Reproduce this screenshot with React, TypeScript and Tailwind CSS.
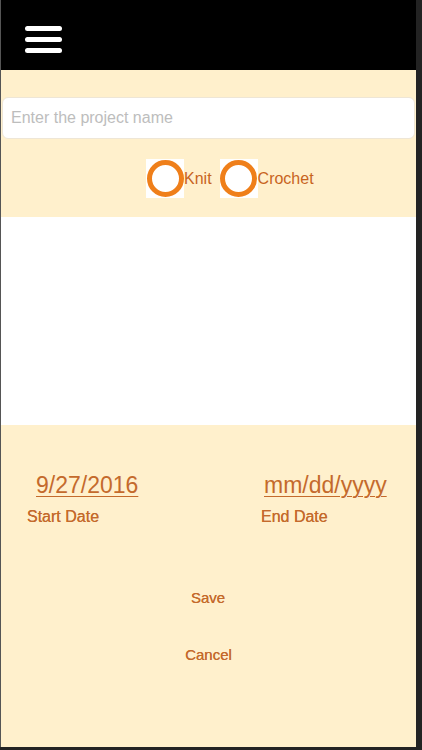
import React from 'react';

const font = { fontFamily: '"Liberation Sans", Arial, sans-serif' };

function Radio({ label }: { label: string }) {
  return (
    <label className="flex items-center">
      <span className="flex h-[39px] w-[38px] items-center justify-center bg-white">
        <span className="block h-[37px] w-[37px] rounded-full border-[5px] border-[#ef7f1a]" />
      </span>
      <span className="text-[16px] leading-none text-[#c8641e]">{label}</span>
    </label>
  );
}

function DateField({
  value,
  label,
  className,
  labelClass,
}: {
  value: string;
  label: string;
  className: string;
  labelClass: string;
}) {
  return (
    <div className={`flex flex-col ${className}`}>
      <span className="text-[23px] leading-[26px] text-[#c46a2c] underline decoration-1 underline-offset-[3px]">
        {value}
      </span>
      <span
        className={`mt-[9px] text-[16px] leading-[19px] text-[#c46a2c] [text-shadow:0_0_0.3px_#c46a2c] ${labelClass}`}
      >
        {label}
      </span>
    </div>
  );
}

export default function App() {
  return (
    <div className="flex h-[750px] w-[422px] bg-[#232323]" style={font}>
      <div className="flex h-[747px] w-[416px] flex-col border-l border-[#555]">
        <header className="flex h-[70px] shrink-0 flex-col gap-[6px] bg-black pl-[24px] pt-[26px]">
          <span className="block h-[5px] w-[37px] rounded-full bg-white" />
          <span className="block h-[5px] w-[37px] rounded-full bg-white" />
          <span className="block h-[5px] w-[37px] rounded-full bg-white" />
        </header>

        <section className="flex h-[147px] shrink-0 flex-col bg-[#fff0cc] pt-[27px]">
          <input
            className="mx-[1px] h-[42px] rounded-[6px] border border-[#eee6d6] bg-white px-[8px] text-[16px] text-gray-700 outline-none placeholder:text-[#bdbdbd]"
            placeholder="Enter the project name"
            style={font}
          />
          <div className="flex items-center gap-[8px] pl-[145px] pt-[20px]">
            <Radio label="Knit" />
            <Radio label="Crochet" />
          </div>
        </section>

        <div className="h-[208px] shrink-0 bg-white" />

        <section className="flex flex-1 flex-col bg-[#fff0cc]">
          <div className="flex pt-[47px]">
            <DateField value="9/27/2016" label="Start Date" className="ml-[35px] w-[228px]" labelClass="-ml-[9px]" />
            <DateField value="mm/dd/yyyy" label="End Date" className="ml-0" labelClass="-ml-[3px]" />
          </div>
          <button className="mt-[63px] self-center pr-[1px] text-[15px] leading-[18px] text-[#c46a2c] [text-shadow:0_0_0.3px_#c46a2c]">
            Save
          </button>
          <button className="mt-[39px] self-center text-[15px] leading-[18px] text-[#c46a2c] [text-shadow:0_0_0.3px_#c46a2c]">
            Cancel
          </button>
        </section>
      </div>
    </div>
  );
}
